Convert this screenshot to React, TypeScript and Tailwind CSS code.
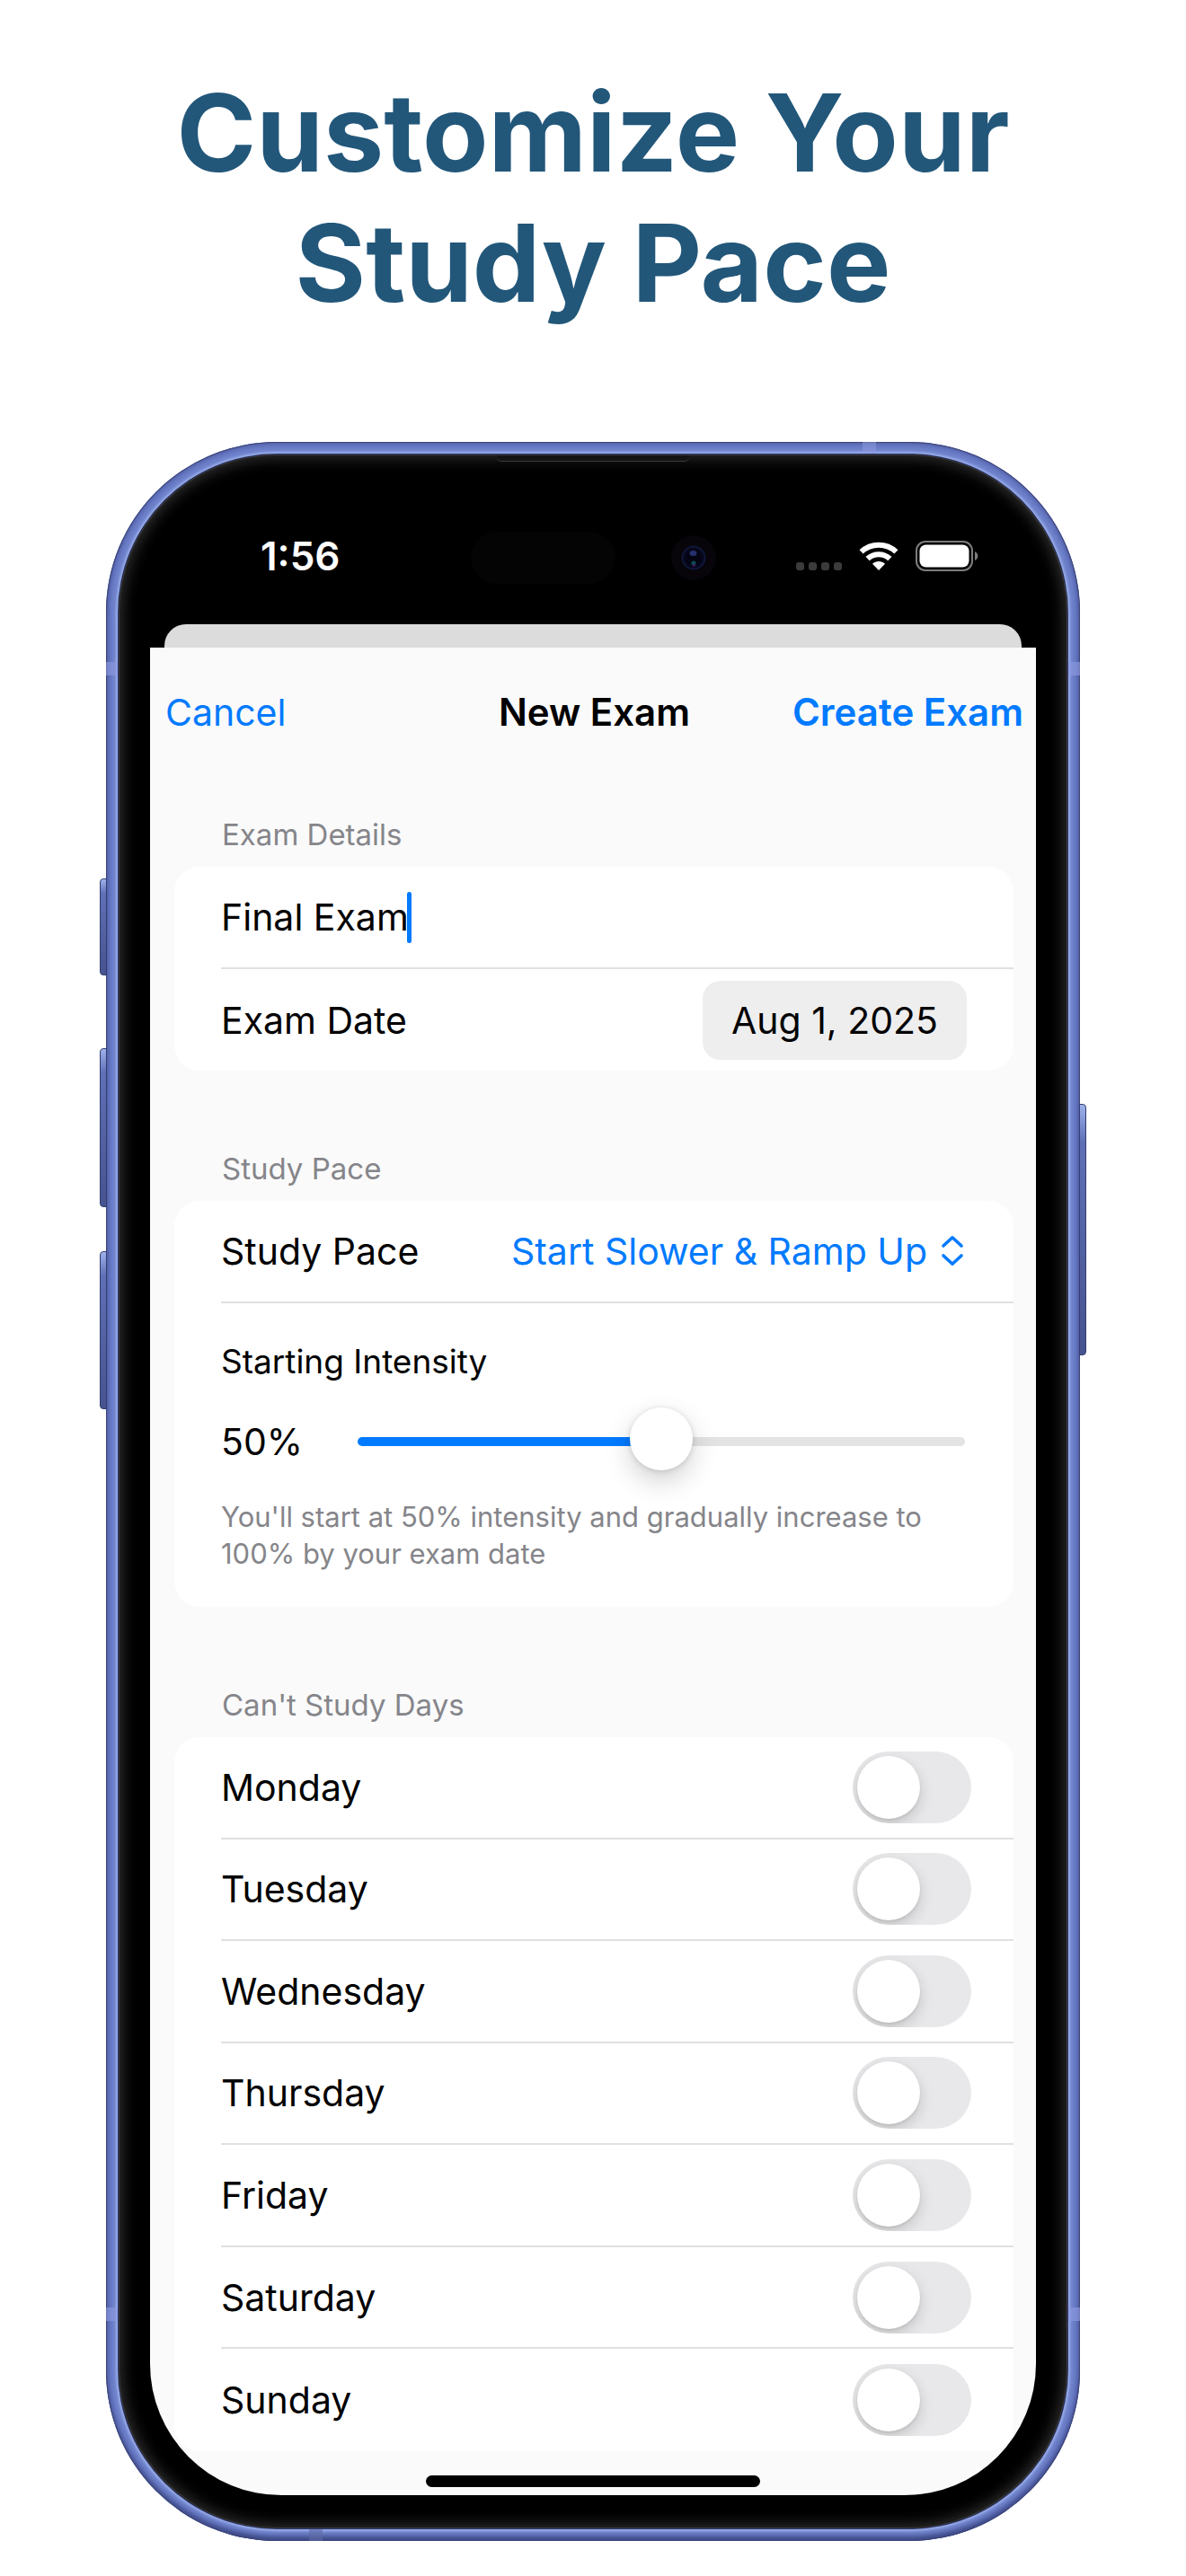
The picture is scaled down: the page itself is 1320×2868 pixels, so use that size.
import { useState } from "react";
import type { CSSProperties, ReactNode } from "react";

const DAYS = ["Monday", "Tuesday", "Wednesday", "Thursday", "Friday", "Saturday", "Sunday"];

function WifiIcon() {
  return (
    <svg viewBox="0 0 44 32" className="h-8 w-11" aria-hidden="true" fill="none" stroke="white" strokeWidth="6">
      <path d="M2.6 11.4 C13.5 1.2 30.5 1.2 41.4 11.4" />
      <path d="M9.6 19 C16.5 12.5 27.5 12.5 34.4 19" />
      <path d="M22 32 L15 24.8 C19 21.2 25 21.2 29 24.8 Z" fill="white" stroke="none" />
    </svg>
  );
}

function BatteryIcon() {
  return (
    <svg viewBox="0 0 70 34" className="h-[34px] w-[70px]" aria-hidden="true">
      <rect x="1" y="1" width="62" height="32" rx="10" fill="none" stroke="#7d7d7d" strokeWidth="2" />
      <rect x="4.5" y="4.5" width="55" height="25" rx="7" fill="white" />
      <path d="M66 12 C70.5 14 70.5 20 66 22 Z" fill="#7d7d7d" />
    </svg>
  );
}

function StatusBar() {
  return (
    <div className="grid h-[189px] grid-cols-[1fr_auto_1fr] items-center px-[64px] pt-[37px]">
      <div className="pl-[59px] text-[44px] leading-[52px] font-semibold text-white">1:56</div>
      <div className="flex items-center gap-[62px] pt-1" aria-hidden="true">
        <div className="h-[58px] w-[161px] rounded-full bg-[#040404]" />
        <div className="flex size-[50px] items-center justify-center rounded-full bg-[#07040a]">
          <svg viewBox="0 0 28 28" className="size-7">
            <circle cx="14" cy="14" r="12.5" fill="#07071c" stroke="#0f1738" strokeWidth="2" />
            <circle cx="14" cy="14" r="8.5" fill="#030312" />
            <ellipse cx="13.5" cy="9" rx="4" ry="3" fill="#26306e" />
            <circle cx="14" cy="20" r="2.6" fill="#0d4a4f" />
            <circle cx="14.5" cy="22.5" r="1.4" fill="#4a1560" />
          </svg>
        </div>
      </div>
      <div className="flex items-center justify-end gap-[19px]">
        <div className="flex gap-[5px] pt-[23px]" aria-hidden="true">
          <span className="size-[9px] rounded-[3px] bg-[#3b3b3b]" />
          <span className="size-[9px] rounded-[3px] bg-[#3b3b3b]" />
          <span className="size-[9px] rounded-[3px] bg-[#3b3b3b]" />
          <span className="size-[9px] rounded-[3px] bg-[#3b3b3b]" />
        </div>
        <WifiIcon />
        <BatteryIcon />
      </div>
    </div>
  );
}

function Section({ title, children }: { title: string; children: ReactNode }) {
  return (
    <section>
      <h3 className="mb-4 pl-[53px] text-[33px] leading-[40px] text-[#85858a]">{title}</h3>
      <div className="rounded-[28px] bg-white">{children}</div>
    </section>
  );
}

function Toggle({ id }: { id: string }) {
  const [on, setOn] = useState(false);
  return (
    <span className="relative block h-20 w-[132px] shrink-0">
      <input
        id={id}
        type="checkbox"
        role="switch"
        checked={on}
        onChange={() => setOn(!on)}
        className="peer h-full w-full cursor-pointer appearance-none rounded-full bg-[#e8e8ea] checked:bg-[#34c759]"
      />
      <span className="pointer-events-none absolute inset-0 overflow-hidden rounded-full p-[5px] peer-checked:pl-[57px]">
        <span className="block size-[70px] rounded-full bg-white shadow-[0_6px_16px_rgba(0,0,0,0.16),0_2px_3px_rgba(0,0,0,0.08)]" />
      </span>
    </span>
  );
}

function PhoneHardware() {
  const button =
    "absolute w-[8px] border border-[#333d70] bg-linear-to-b from-[#9fb2ec] via-[#5f70b6] via-15% to-[#46538f]";
  return (
    <div aria-hidden="true">
      <span className={button + " top-[486px] -left-[7px] h-[108px] rounded-l-[4px]"} />
      <span className={button + " top-[675px] -left-[7px] h-[177px] rounded-l-[4px]"} />
      <span className={button + " top-[901px] -left-[7px] h-[176px] rounded-l-[4px]"} />
      <span className={button + " top-[737px] -right-[7px] h-[280px] rounded-r-[4px]"} />
      <span className="absolute top-0 left-[842px] h-[13px] w-[15px] bg-[#8f9be0]/50" />
      <span className="absolute bottom-0 left-[226px] h-[13px] w-[15px] bg-[#5f6aa5]/60" />
      <span className="absolute top-[245px] left-0 h-[15px] w-[13px] bg-[#8f9be0]/60" />
      <span className="absolute top-[245px] right-0 h-[15px] w-[13px] bg-[#8f9be0]/60" />
      <span className="absolute bottom-[245px] left-0 h-[15px] w-[13px] bg-[#8f9be0]/60" />
      <span className="absolute right-0 bottom-[245px] h-[15px] w-[13px] bg-[#8f9be0]/60" />
    </div>
  );
}

function ExamForm() {
  const [name, setName] = useState("Final Exam");
  const [intensity, setIntensity] = useState(50);
  return (
    <form
      onSubmit={(e) => e.preventDefault()}
      className="overflow-hidden rounded-b-[146px] bg-[#fafafa] text-[41px] leading-[52px] text-black"
    >
      <header className="grid h-[144px] grid-cols-[1fr_auto_1fr] items-center pr-[14px] pl-[17px]">
        <button type="button" className="justify-self-start text-[#007aff]">
          Cancel
        </button>
        <h2 className="text-[42px] font-semibold">New Exam</h2>
        <button type="submit" className="justify-self-end text-[42px] font-semibold text-[#007aff]">
          Create Exam
        </button>
      </header>

      <div className="flex flex-col gap-[89px] pt-11 pr-[25px] pl-[27px]">
        <Section title="Exam Details">
          <div className="pl-[52px]">
            <div className="flex h-[114px] items-center border-b-2 border-[#e0e0e1]">
              <input
                type="text"
                aria-label="Exam name"
                value={name}
                onChange={(e) => setName(e.target.value)}
                className="field-sizing-content caret-transparent outline-none"
              />
              <span className="-ml-[2px] h-[57px] w-[5px] rounded-full bg-[#007aff]" aria-hidden="true" />
            </div>
            <div className="flex h-[113px] items-center justify-between pr-[52px]">
              <span id="exam-date">Exam Date</span>
              <button type="button" aria-describedby="exam-date" className="rounded-[20px] bg-[#eeeeef] px-8 py-[18px]">
                Aug 1, 2025
              </button>
            </div>
          </div>
        </Section>

        <Section title="Study Pace">
          <div className="pl-[52px]">
            <div className="flex h-[114px] items-center justify-between border-b-2 border-[#e0e0e1] pr-[52px]">
              <label htmlFor="pace">Study Pace</label>
              <div className="flex items-center gap-3 text-[#007aff]">
                <select id="pace" defaultValue="ramp" className="field-sizing-content appearance-none outline-none">
                  <option value="ramp">Start Slower &amp; Ramp Up</option>
                  <option value="steady">Steady Pace</option>
                </select>
                <svg
                  viewBox="0 0 32 36"
                  className="h-9 w-8"
                  aria-hidden="true"
                  fill="none"
                  stroke="currentColor"
                  strokeWidth="3.6"
                  strokeLinecap="round"
                  strokeLinejoin="round"
                >
                  <path d="M6 12 L16 2.8 L26 12" />
                  <path d="M6 23 L16 32.2 L26 23" />
                </svg>
              </div>
            </div>
            <div className="pt-[43px] pr-[54px] pb-[39px]">
              <label htmlFor="intensity" className="block text-[37px] leading-[44px]">
                Starting Intensity
              </label>
              <div className="mt-[31px] flex h-[72px] items-center">
                <output htmlFor="intensity" className="w-[152px] shrink-0">
                  {`${intensity}%`}
                </output>
                <input
                  id="intensity"
                  type="range"
                  min={0}
                  max={100}
                  value={intensity}
                  onChange={(e) => setIntensity(Number(e.target.value))}
                  style={{ "--fill": intensity + "%" } as CSSProperties}
                  className="h-[72px] min-w-0 flex-1 appearance-none bg-transparent [&::-webkit-slider-runnable-track]:h-[10px] [&::-webkit-slider-runnable-track]:rounded-full [&::-webkit-slider-runnable-track]:bg-[linear-gradient(to_right,#007aff_var(--fill),#e3e3e4_var(--fill))] [&::-webkit-slider-thumb]:-mt-[33px] [&::-webkit-slider-thumb]:size-[70px] [&::-webkit-slider-thumb]:appearance-none [&::-webkit-slider-thumb]:rounded-full [&::-webkit-slider-thumb]:bg-white [&::-webkit-slider-thumb]:shadow-[0_12px_30px_rgba(0,0,0,0.18),0_1px_6px_rgba(0,0,0,0.14)]"
                />
              </div>
              <p className="mt-[27px] text-[31px] leading-[41px] text-[#85858a]">
                {`You'll start at ${intensity}% intensity and gradually increase to 100% by your exam date`}
              </p>
            </div>
          </div>
        </Section>

        <Section title="Can't Study Days">
          <ul className="grid min-h-[795px] auto-rows-fr pl-[52px]">
            {DAYS.map((day) => (
              <li
                key={day}
                className="flex items-center justify-between border-b-2 border-[#e0e0e1] pr-[47px] last:border-b-0"
              >
                <label htmlFor={day} className="flex-1">
                  {day}
                </label>
                <Toggle id={day} />
              </li>
            ))}
          </ul>
        </Section>
      </div>

      <div className="flex justify-center pt-[27px] pb-[9px]">
        <div className="h-[13px] w-[372px] rounded-full bg-black" />
      </div>
    </form>
  );
}

export default function App() {
  return (
    <main className="min-h-screen bg-white pt-[75px] pb-[37px] font-[Inter,'Liberation_Sans',sans-serif]">
      <h1 className="mx-auto max-w-[1000px] text-center text-[120px] leading-[145px] font-bold text-[#22577a]">
        Customize Your Study Pace
      </h1>

      <div className="relative mx-auto mt-[127px] w-full max-w-[1084px]">
        <PhoneHardware />
        <div className="rounded-[190px] bg-[#6f82cc] p-[14px] shadow-[inset_0_0_0_1px_#3d4675,inset_0_0_7px_2px_#46529b,inset_0_-6px_6px_-2px_#2d3868]">
          <div className="rounded-[176px] bg-black px-[35px] pb-[37px] shadow-[inset_0_0_0_1px_#3c3c3c,inset_0_0_16px_4px_#303030,0_0_0_1px_#27306b,0_0_3px_3px_#9db1ea]">
            <div className="relative">
              <div
                className="absolute top-px left-1/2 h-[7px] w-[214px] -translate-x-1/2 rounded-b-[5px] border-b border-[#3a3a3a] bg-[#141414]"
                aria-hidden="true"
              />
              <StatusBar />
            </div>
            <div className="mx-4 h-[26px] rounded-t-[24px] bg-[#dcdcdc]" aria-hidden="true" />
            <ExamForm />
          </div>
        </div>
      </div>
    </main>
  );
}
